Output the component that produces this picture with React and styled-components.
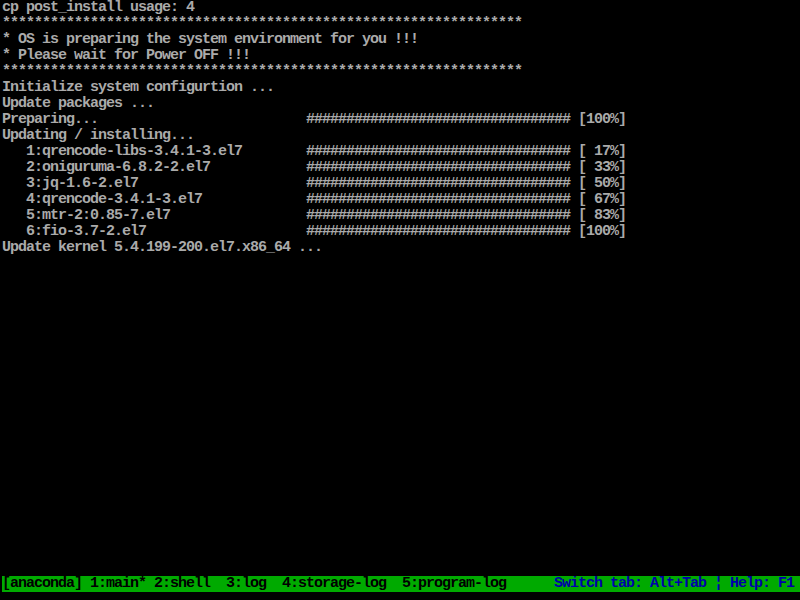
import React from "react";
import styled, { createGlobalStyle } from "styled-components";

const GlobalStyle = createGlobalStyle`
  html, body {
    margin: 0;
    padding: 0;
    background: #000;
  }
`;

const Screen = styled.div`
  width: 800px;
  height: 600px;
  background: #000;
  overflow: hidden;
  display: flex;
  flex-direction: column;
  font-family: "Liberation Mono", "DejaVu Sans Mono", monospace;
  font-size: 15px;
  letter-spacing: -1px;
  font-weight: bold;
  color: #aaaaaa;
`;

const Console = styled.div`
  flex: 1;
  padding-left: 2px;
`;

const Line = styled.div`
  height: 16px;
  line-height: 16px;
  white-space: pre;
`;

const StatusBar = styled.div`
  height: 16px;
  line-height: 16px;
  margin: 0 0 8px 2px;
  background: #00aa00;
  color: #000;
  white-space: pre;
  display: flex;
`;

const Tabs = styled.span`
  width: 552px;
`;

const Help = styled.span`
  color: #0000aa;
`;

const stars = "*".repeat(65);

const packages = [
  { name: "   1:qrencode-libs-3.4.1-3.el7", pct: " 17%" },
  { name: "   2:oniguruma-6.8.2-2.el7", pct: " 33%" },
  { name: "   3:jq-1.6-2.el7", pct: " 50%" },
  { name: "   4:qrencode-3.4.1-3.el7", pct: " 67%" },
  { name: "   5:mtr-2:0.85-7.el7", pct: " 83%" },
  { name: "   6:fio-3.7-2.el7", pct: "100%" },
];

function progress(label, pct) {
  return label.padEnd(38, " ") + "#".repeat(33) + " [" + pct + "]";
}

export default function App() {
  const lines = [
    "cp post_install usage: 4",
    stars,
    "* OS is preparing the system environment for you !!!",
    "* Please wait for Power OFF !!!",
    stars,
    "Initialize system configurtion ...",
    "Update packages ...",
    progress("Preparing...", "100%"),
    "Updating / installing...",
    ...packages.map(p => progress(p.name, p.pct)),
    "Update kernel 5.4.199-200.el7.x86_64 ...",
  ];

  return (
    <>
      <GlobalStyle />
      <Screen>
        <Console>
          {lines.map((text, i) => (
            <Line key={i}>{text}</Line>
          ))}
        </Console>
        <StatusBar>
          <Tabs>[anaconda] 1:main* 2:shell  3:log  4:storage-log  5:program-log</Tabs>
          <Help>Switch tab: Alt+Tab ¦ Help: F1</Help>
        </StatusBar>
      </Screen>
    </>
  );
}
